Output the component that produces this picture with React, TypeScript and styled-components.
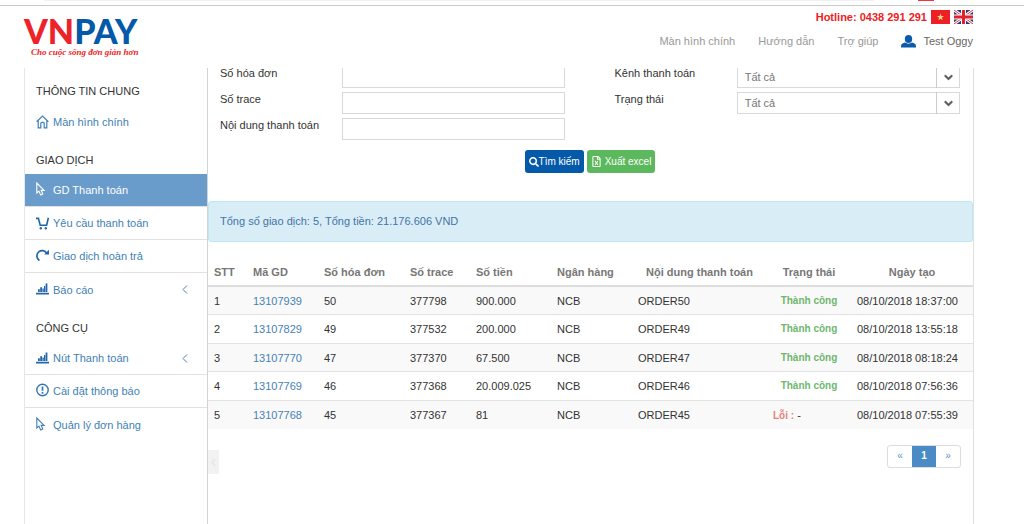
import React, { useId, useState } from "react";
import styled, { createGlobalStyle } from "styled-components";
import { FaChevronDown, FaRegFileExcel, FaSearch } from "react-icons/fa";

const GlobalStyle = createGlobalStyle`
  *, *::before, *::after { box-sizing: border-box; }
  html { overflow: hidden; }
  body {
    margin: 0;
    background: #fff;
    color: #333;
    font-family: "Liberation Sans", Arial, sans-serif;
    font-size: 11px;
    line-height: 14px;
  }
  a { text-decoration: none; color: inherit; }
  button, input, select { font: inherit; }
`;

const Page = styled.div`
  display: flex;
  flex-direction: column;
  height: 100vh;
`;

const TopStrip = styled.div`
  display: flex;
  align-items: flex-start;
  flex: none;
  height: 6px;
  padding: 0 90px 0 44px;
  border-bottom: 1px solid #c9c9c9;
`;

const AddressBar = styled.div`
  flex: 1;
  height: 1px;
  margin-right: 44px;
  background: #f1f1f1;
`;

const Badge = styled.div`
  width: 16px;
  height: 1px;
  background: #f0383c;
`;

const Header = styled.header`
  display: flex;
  justify-content: space-between;
  flex: none;
  height: 62px;
  padding: 0 51px 0 24px;
`;

const Brand = styled.a`
  display: flex;
  flex-direction: column;
  padding-top: 8px;
`;

const BrandName = styled.span`
  font-family: Lato, sans-serif;
  font-size: 34px;
  font-weight: 900;
  line-height: 33px;
  color: #ee2229;
`;

const BrandBlue = styled.span`
  color: #0459a8;
`;

const Slogan = styled.span`
  padding-left: 7px;
  font-family: "Liberation Serif", "Times New Roman", serif;
  font-size: 9px;
  font-style: italic;
  font-weight: 700;
  line-height: 10px;
  color: #ee1c24;
`;

const HeaderRight = styled.div`
  display: flex;
  flex-direction: column;
  align-items: flex-end;
  gap: 10px;
  padding-top: 4px;
`;

const Hotline = styled.div`
  display: flex;
  align-items: center;
  gap: 4px;
  color: #ee1c24;
  font-weight: 700;
`;

const FlagButton = styled.button`
  display: block;
  width: 19px;
  height: 14px;
  padding: 0;
  border: 0;
  background: none;
  svg { display: block; }
`;

const Nav = styled.nav`
  display: flex;
  align-items: center;
  gap: 23px;
  color: #999;
`;

const UserLink = styled.a`
  display: flex;
  align-items: center;
  gap: 7px;
  color: #666;
`;

const Body = styled.div`
  display: flex;
  flex: 1;
  min-height: 0;
  margin: 0 50px 0 24px;
`;

const Sidebar = styled.aside`
  flex: none;
  width: 184px;
  padding-top: 1px;
  border-left: 1px solid #e7e7e7;
  border-right: 1px solid #d3d3d3;
`;

const MenuHeading = styled.h2`
  margin: 0;
  padding: 15px 11px 7px;
  font-size: 11px;
  font-weight: 400;
  line-height: 14px;
`;

const MenuList = styled.ul`
  margin: 0;
  padding: 0;
  list-style: none;
`;

const MenuItem = styled.li`
  &:not(:last-child) { border-bottom: 1px solid #e2e2e2; }
`;

const MenuLink = styled.a<{ $active?: boolean }>`
  display: flex;
  align-items: center;
  gap: 4px;
  height: 32px;
  padding: 0 19px 0 11px;
  color: ${(p) => (p.$active ? "#fff" : "#437fb5")};
  background: ${(p) => (p.$active ? "#699bcb" : "transparent")};
  ${MenuItem}:last-child & { height: 33px; }
  svg { flex: none; }
`;

const MenuText = styled.span`
  flex: 1;
`;

const Main = styled.main`
  flex: 1;
  min-width: 0;
  overflow: hidden;
  border-right: 1px solid #e0e0e0;
`;

const SearchForm = styled.form`
  margin-top: -2px;
  padding: 0 13px 28px 12px;
`;

const FieldColumns = styled.div`
  display: grid;
  grid-template-columns: 1fr 1fr;
  gap: 49px;
`;

const FieldColumn = styled.div`
  display: flex;
  flex-direction: column;
  gap: 4px;
`;

const FieldRow = styled.div`
  display: grid;
  grid-template-columns: 122fr 223fr;
  align-items: start;
`;

const TextBox = styled.input`
  width: 100%;
  height: 22px;
  padding: 0 8px;
  border: 1px solid #d9d9d9;
  background: #fff;
  color: #555;
`;

const SelectWrap = styled.div`
  position: relative;
`;

const SelectBox = styled.select`
  appearance: none;
  display: block;
  width: 100%;
  height: 22px;
  padding: 0 30px 0 7px;
  border: 1px solid #d9d9d9;
  border-radius: 0;
  background: #fff;
  color: #777;
`;

const SelectArrow = styled.span`
  position: absolute;
  top: 0;
  right: 0;
  display: flex;
  align-items: center;
  justify-content: center;
  width: 24px;
  height: 22px;
  border-left: 1px solid #ccc;
  color: #555;
  pointer-events: none;
  svg { stroke: currentColor; stroke-width: 50px; }
`;

const FormActions = styled.div`
  display: flex;
  justify-content: center;
  gap: 3px;
  padding-top: 10px;
`;

const ActionButton = styled.button<{ $tone: string; $gap: number }>`
  display: flex;
  align-items: center;
  gap: ${(p) => p.$gap}px;
  height: 23px;
  padding: 0 4px;
  border: 0;
  border-radius: 3px;
  background: ${(p) => p.$tone};
  color: #fff;
  font-size: 10px;
`;

const Summary = styled.div`
  padding: 12px 11px;
  border: 1px solid #bce8f1;
  border-radius: 3px;
  background: #d9edf7;
  color: #4474a6;
  line-height: 15px;
`;

const Table = styled.table`
  width: 100%;
  margin-top: 15px;
  table-layout: fixed;
  border-spacing: 0;
`;

const HeadCell = styled.th<{ $center?: boolean }>`
  height: 30px;
  padding: 1px 6px 0;
  border-bottom: 2px solid #ddd;
  color: #777;
  text-align: ${(p) => (p.$center ? "center" : "left")};
  white-space: nowrap;
`;

const Cell = styled.td`
  height: 29px;
  padding: 0 6px;
  white-space: nowrap;
`;

const Row = styled.tr`
  &:nth-child(odd) { background: #f9f9f9; }
  &:nth-child(odd) ${Cell} { height: 28px; }
  &:not(:last-child) ${Cell} { border-bottom: 1px solid #e3e3e3; }
`;

const TransactionLink = styled.a`
  color: #4682b4;
`;

const Success = styled.span`
  display: block;
  color: #6fb76f;
  font-size: 10px;
  font-weight: 700;
  text-align: center;
`;

const Failure = styled.span`
  color: #e8807c;
  font-size: 10px;
  font-weight: 700;
`;

const TableFooter = styled.div`
  display: flex;
  justify-content: space-between;
  align-items: flex-end;
  padding: 16px 12px 0 0;
`;

const CollapseHandle = styled.button`
  display: flex;
  align-items: center;
  justify-content: center;
  width: 11px;
  height: 24px;
  margin-top: 5px;
  padding: 0;
  border: 0;
  background: #f2f2f2;
  color: #d0d0d0;
`;

const Pagination = styled.nav`
  display: flex;
  align-self: flex-start;
  border: 1px solid #ddd;
  border-radius: 3px;
  font-size: 10px;
`;

const PageLink = styled.a<{ $active?: boolean }>`
  width: 24px;
  height: 21px;
  line-height: 20px;
  text-align: center;
  font-weight: ${(p) => (p.$active ? 700 : 400)};
  color: ${(p) => (p.$active ? "#fff" : "#5b97c9")};
  background: ${(p) => (p.$active ? "#4b8bc5" : "transparent")};
`;

const HomeIcon = () => (
  <svg width="13" height="14" viewBox="0 0 13 14" fill="none" stroke="currentColor" strokeWidth="1.2">
    <path d="M.6 6.800 6.500 1l5.900 5.800M2.200 5.600v7.200h2.600V8.400q0-1 1-1h1.400q1 0 1 1v4.400h2.600V5.600" />
  </svg>
);

const PointerIcon = () => (
  <svg width="13" height="16" viewBox="0 0 13 16" fill="none" stroke="currentColor" strokeWidth="1.1">
    <path d="M.8 1v10l2.100-1.900 1.800 3.900 2.100-1-1.600-3.600h2.900z" />
  </svg>
);

const CartIcon = () => (
  <svg width="13" height="13" viewBox="0 0 13 13" fill="none" stroke="#1f66a8" strokeWidth="1.6">
    <path d="M0 1.400h2.400l1.800 6.800h6.400l1.800-7.400" />
    <circle cx="4.800" cy="11.200" r="1.200" fill="#1f66a8" stroke="none" />
    <circle cx="9.800" cy="11.200" r="1.200" fill="#1f66a8" stroke="none" />
  </svg>
);

const RedoIcon = () => (
  <svg width="13" height="14" viewBox="0 0 13 14" fill="none" stroke="#1f66a8" strokeWidth="1.700">
    <path d="M3.400 11.600C.2 9.400.1 4.800 3 2.600c2.300-1.700 5.800-1.200 7.600 1.400" />
    <path d="M13 .8v4.800H8.200z" fill="#1f66a8" stroke="none" />
  </svg>
);

const ChartIcon = () => (
  <svg width="13" height="13" viewBox="0 0 13 13" fill="#2467aa">
    <path d="M0 9.800h13v1.700H0zM2 6.200h1.800V9H2zM4.200 4.200H6V9H4.200zM6.400 5.400h1.400V9H6.400zM8 3h1.200v6H8zM9.600.6h1.800V9H9.600z" />
  </svg>
);

const NoticeIcon = () => (
  <svg width="13" height="16" viewBox="0 0 13 16" fill="none" stroke="#3476b4" strokeWidth="1.400">
    <circle cx="6.500" cy="7" r="5.700" />
    <path d="M6.500 3.400v4.400M6.500 9v1.700" strokeWidth="1.700" />
  </svg>
);

const AngleLeft = ({ width = 6, height = 9 }: { width?: number; height?: number }) => (
  <svg width={width} height={height} viewBox="0 0 6 9" fill="none" stroke="currentColor" strokeWidth="1">
    <path d="M5 .5 1 4.500l4 4" />
  </svg>
);

const UserIcon = () => (
  <svg width="15" height="13" viewBox="0 0 15 13" fill="#0a5cab">
    <ellipse cx="7.500" cy="4" rx="3.700" ry="4" />
    <path d="M0 12.500V11c0-2 2-2.800 4-3.400 2 1.500 5 1.500 7 0 2 .6 4 1.400 4 3.400v1.500z" />
  </svg>
);

const VietnamFlag = () => (
  <svg width="19" height="14" viewBox="0 0 19 14">
    <path fill="#ee2026" d="M0 0h19v14H0z" />
    <path fill="#f0d67c" d="m9.500 3.600.9 2.500h2.600l-2.100 1.600.8 2.600-2.200-1.600-2.200 1.600.8-2.600L6 6.100h2.600z" />
  </svg>
);

const UkFlag = () => (
  <svg width="19" height="14" viewBox="0 0 19 14">
    <path fill="#2f3a70" d="M0 0h19v14H0z" />
    <path stroke="#fff" strokeWidth="3" d="m0 0 19 14M19 0 0 14" />
    <path stroke="#e0303c" strokeWidth="1" d="m0 0 19 14M19 0 0 14" />
    <path stroke="#fff" strokeWidth="5" d="M9.500 0v14M0 7h19" />
    <path stroke="#e0202c" strokeWidth="3" d="M9.500 0v14M0 7h19" />
  </svg>
);

interface MenuEntry {
  label: string;
  icon: React.ReactNode;
  active?: boolean;
  expandable?: boolean;
}

const menu: { heading: string; items: MenuEntry[] }[] = [
  { heading: "THÔNG TIN CHUNG", items: [{ label: "Màn hình chính", icon: <HomeIcon /> }] },
  {
    heading: "GIAO DỊCH",
    items: [
      { label: "GD Thanh toán", icon: <PointerIcon />, active: true },
      { label: "Yêu cầu thanh toán", icon: <CartIcon /> },
      { label: "Giao dịch hoàn trả", icon: <RedoIcon /> },
      { label: "Báo cáo", icon: <ChartIcon />, expandable: true },
    ],
  },
  {
    heading: "CÔNG CỤ",
    items: [
      { label: "Nút Thanh toán", icon: <ChartIcon />, expandable: true },
      { label: "Cài đặt thông báo", icon: <NoticeIcon /> },
      { label: "Quản lý đơn hàng", icon: <PointerIcon /> },
    ],
  },
];

const columns = [
  { title: "STT", width: 39 },
  { title: "Mã GD", width: 71 },
  { title: "Số hóa đơn", width: 86 },
  { title: "Số trace", width: 66 },
  { title: "Số tiền", width: 81 },
  { title: "Ngân hàng", width: 81 },
  { title: "Nội dung thanh toán", width: 135, center: true },
  { title: "Trạng thái", width: 84, center: true },
  { title: "Ngày tạo", width: 122, center: true },
];

const transactions = [
  { id: "13107939", invoice: "50", trace: "377798", amount: "900.000", order: "ORDER50", ok: true, created: "08/10/2018 18:37:00" },
  { id: "13107829", invoice: "49", trace: "377532", amount: "200.000", order: "ORDER49", ok: true, created: "08/10/2018 13:55:18" },
  { id: "13107770", invoice: "47", trace: "377370", amount: "67.500", order: "ORDER47", ok: true, created: "08/10/2018 08:18:24" },
  { id: "13107769", invoice: "46", trace: "377368", amount: "20.009.025", order: "ORDER46", ok: true, created: "08/10/2018 07:56:36" },
  { id: "13107768", invoice: "45", trace: "377367", amount: "81", order: "ORDER45", ok: false, created: "08/10/2018 07:55:39" },
];

const TextField = ({ label }: { label: string }) => {
  const id = useId();
  const [value, setValue] = useState("");
  return (
    <FieldRow>
      <label htmlFor={id}>{label}</label>
      <TextBox id={id} type="text" value={value} onChange={(e) => setValue(e.target.value)} />
    </FieldRow>
  );
};

const SelectField = ({ label }: { label: string }) => {
  const id = useId();
  return (
    <FieldRow>
      <label htmlFor={id}>{label}</label>
      <SelectWrap>
        <SelectBox id={id}>
          <option>Tất cả</option>
        </SelectBox>
        <SelectArrow>
          <FaChevronDown size={9} />
        </SelectArrow>
      </SelectWrap>
    </FieldRow>
  );
};

export default function App() {
  return (
    <Page>
      <GlobalStyle />
      <TopStrip>
        <AddressBar />
        <Badge />
      </TopStrip>
      <Header>
        <Brand href="#">
          <BrandName>
            VN<BrandBlue>PAY</BrandBlue>
          </BrandName>
          <Slogan>Cho cuộc sống đơn giản hơn</Slogan>
        </Brand>
        <HeaderRight>
          <Hotline>
            <span>Hotline: 0438 291 291</span>
            <FlagButton type="button" aria-label="Tiếng Việt">
              <VietnamFlag />
            </FlagButton>
            <FlagButton type="button" aria-label="English">
              <UkFlag />
            </FlagButton>
          </Hotline>
          <Nav>
            <a href="#">Màn hình chính</a>
            <a href="#">Hướng dẫn</a>
            <a href="#">Trợ giúp</a>
            <UserLink href="#">
              <UserIcon />
              Test Oggy
            </UserLink>
          </Nav>
        </HeaderRight>
      </Header>
      <Body>
        <Sidebar>
          {menu.map((group) => (
            <section key={group.heading}>
              <MenuHeading>{group.heading}</MenuHeading>
              <MenuList>
                {group.items.map((item) => (
                  <MenuItem key={item.label}>
                    <MenuLink href="#" $active={item.active}>
                      {item.icon}
                      <MenuText>{item.label}</MenuText>
                      {item.expandable && <AngleLeft />}
                    </MenuLink>
                  </MenuItem>
                ))}
              </MenuList>
            </section>
          ))}
        </Sidebar>
        <Main>
          <SearchForm onSubmit={(e) => e.preventDefault()}>
            <FieldColumns>
              <FieldColumn>
                <TextField label="Số hóa đơn" />
                <TextField label="Số trace" />
                <TextField label="Nội dung thanh toán" />
              </FieldColumn>
              <FieldColumn>
                <SelectField label="Kênh thanh toán" />
                <SelectField label="Trạng thái" />
              </FieldColumn>
            </FieldColumns>
            <FormActions>
              <ActionButton type="submit" $tone="#0459a8" $gap={0}>
                <FaSearch size={10} />
                Tìm kiếm
              </ActionButton>
              <ActionButton type="button" $tone="#5cb85c" $gap={3}>
                <FaRegFileExcel size={11} />
                Xuất excel
              </ActionButton>
            </FormActions>
          </SearchForm>
          <Summary>Tổng số giao dịch: 5, Tổng tiền: 21.176.606 VND</Summary>
          <Table>
            <colgroup>
              {columns.map((c) => (
                <col key={c.title} width={c.width} />
              ))}
            </colgroup>
            <thead>
              <tr>
                {columns.map((c) => (
                  <HeadCell key={c.title} scope="col" $center={c.center}>
                    {c.title}
                  </HeadCell>
                ))}
              </tr>
            </thead>
            <tbody>
              {transactions.map((t, i) => (
                <Row key={t.id}>
                  <Cell>{i + 1}</Cell>
                  <Cell>
                    <TransactionLink href="#">{t.id}</TransactionLink>
                  </Cell>
                  <Cell>{t.invoice}</Cell>
                  <Cell>{t.trace}</Cell>
                  <Cell>{t.amount}</Cell>
                  <Cell>NCB</Cell>
                  <Cell>{t.order}</Cell>
                  <Cell>
                    {t.ok ? (
                      <Success>Thành công</Success>
                    ) : (
                      <>
                        <Failure>Lỗi :</Failure> -
                      </>
                    )}
                  </Cell>
                  <Cell>{t.created}</Cell>
                </Row>
              ))}
            </tbody>
          </Table>
          <TableFooter>
            <CollapseHandle type="button" aria-label="Thu gọn">
              <AngleLeft width={5} height={7} />
            </CollapseHandle>
            <Pagination>
              <PageLink href="#">«</PageLink>
              <PageLink href="#" $active>
                1
              </PageLink>
              <PageLink href="#">»</PageLink>
            </Pagination>
          </TableFooter>
        </Main>
      </Body>
    </Page>
  );
}
